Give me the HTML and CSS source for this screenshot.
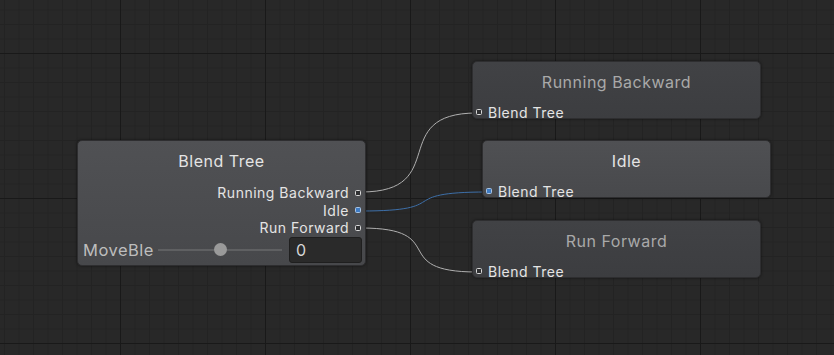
FILE: index.html
```html
<!DOCTYPE html>
<html lang="en">

<head>
	<meta charset="UTF-8">
	<meta name="viewport" content="width=device-width, initial-scale=1.0">
	<title>Animator - Blend Tree</title>
	<link rel="stylesheet" href="styles.css">
</head>

<body>
	<div class="graph">
		<svg class="wires" width="834" height="355" viewBox="0 0 834 355">
			<path class="wire" d="M361 192 C 452 192, 386 113, 477 113" />
			<path class="wire wire-active" d="M361 211 C 456 211, 392 192, 487 192" />
			<path class="wire" d="M361 228 C 452 228, 386 272, 477 272" />
		</svg>

		<div class="node node-tree">
			<div class="node-title">Blend Tree</div>
			<ul class="outputs">
				<li>Running Backward<span class="port"></span></li>
				<li>Idle<span class="port port-active"></span></li>
				<li>Run Forward<span class="port"></span></li>
			</ul>
			<div class="param-row">
				<span class="param-name">MoveBle</span>
				<div class="slider">
					<div class="slider-thumb"></div>
				</div>
				<div class="param-value">0</div>
			</div>
		</div>

		<div class="node node-clip node-rb">
			<div class="node-title dim">Running Backward</div>
			<div class="input"><span class="port"></span>Blend Tree</div>
		</div>

		<div class="node node-clip node-idle">
			<div class="node-title">Idle</div>
			<div class="input"><span class="port port-active"></span>Blend Tree</div>
		</div>

		<div class="node node-clip node-rf">
			<div class="node-title dim">Run Forward</div>
			<div class="input"><span class="port"></span>Blend Tree</div>
		</div>
	</div>
</body>

</html>
```

FILE: styles.css
```css
:root {
	--canvas: #282828;
	--grid-minor: #232323;
	--grid-major: #191919;
	--text-light: #e4e4e4;
	--text-dim: #a9a9a9;
	--wire: #b0b0b0;
	--wire-active: #3d6fa8;
}

* {
	margin: 0;
	padding: 0;
	box-sizing: border-box;
}

body {
	width: 834px;
	height: 355px;
	overflow: hidden;
	background-color: var(--canvas);
	font-family: Inter, "Noto Sans", sans-serif;
}

.graph {
	position: relative;
	width: 834px;
	height: 355px;
	background-color: var(--canvas);
	background-image:
		linear-gradient(var(--grid-major) 1px, transparent 1px),
		linear-gradient(90deg, var(--grid-major) 1px, transparent 1px),
		linear-gradient(var(--grid-minor) 1px, transparent 1px),
		linear-gradient(90deg, var(--grid-minor) 1px, transparent 1px);
	background-size: 145px 145px, 145px 145px, 14.5px 14.5px, 14.5px 14.5px;
	background-position: 120px 53px, 120px 53px, 120px 53px, 120px 53px;
}

.wires {
	position: absolute;
	left: 0;
	top: 0;
}

.wire {
	fill: none;
	stroke: var(--wire);
	stroke-width: 1;
}

.wire-active {
	stroke: var(--wire-active);
}

/* nodes sit on the free canvas */
.node {
	position: absolute;
	width: 289px;
	border-radius: 5px;
	border: 1px solid #2e2e30;
	box-shadow: 0 0 3px rgba(0, 0, 0, 0.55);
	color: var(--text-light);
	letter-spacing: 0.5px;
}

.node-tree {
	left: 77px;
	top: 140px;
	height: 126px;
	background: linear-gradient(#505154, #47484b);
	display: flex;
	flex-direction: column;
}

.node-clip {
	height: 58px;
	background: linear-gradient(#414245, #3c3d40);
}

.node-rb {
	left: 472px;
	top: 61px;
}

.node-idle {
	left: 482px;
	top: 140px;
	background: linear-gradient(#4f5053, #48494c);
}

.node-rf {
	left: 472px;
	top: 220px;
}

.node-title {
	height: 40px;
	line-height: 40px;
	text-align: center;
	font-size: 16px;
	color: var(--text-light);
}

.node-clip .node-title {
	height: 42px;
	line-height: 41px;
}

.node-title.dim {
	color: var(--text-dim);
}

.outputs {
	list-style: none;
	margin-top: 3px;
	padding-right: 4px;
}

.outputs li {
	display: flex;
	justify-content: flex-end;
	align-items: center;
	gap: 6px;
	height: 17.5px;
	font-size: 14px;
	color: var(--text-light);
}

.port {
	display: inline-block;
	width: 6px;
	height: 6px;
	border: 1px solid #d8d8d8;
	border-radius: 1.5px;
	background-color: #2f3032;
}

.port-active {
	border-color: #a9c4e4;
	background-color: #3f7cc4;
}

.input {
	display: flex;
	align-items: center;
	gap: 6px;
	height: 16px;
	padding-left: 3px;
	font-size: 14px;
	color: var(--text-light);
}

.param-row {
	display: flex;
	align-items: center;
	gap: 2px;
	height: 26px;
	margin-top: 0;
	padding: 0 3px 0 5px;
}

.param-name {
	font-size: 16.5px;
	color: #bdbdbd;
	width: 73px;
	white-space: nowrap;
}

.slider {
	position: relative;
	flex: 1;
	height: 2px;
	margin-right: 5px;
	background-color: #5f6062;
}

.slider-thumb {
	position: absolute;
	left: 56px;
	top: -6px;
	width: 13px;
	height: 13px;
	border-radius: 50%;
	background-color: #9a9a9a;
}

.param-value {
	width: 73px;
	height: 26px;
	line-height: 25px;
	padding-left: 6px;
	font-size: 16px;
	color: #d6d6d6;
	background-color: #2a2a2a;
	border: 1px solid #1f1f1f;
	border-radius: 3px;
}
```
